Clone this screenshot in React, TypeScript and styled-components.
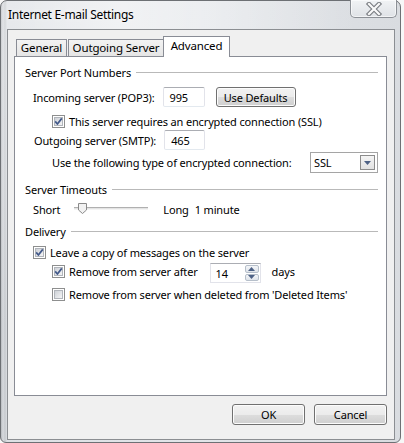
import React from "react";
import styled, { createGlobalStyle } from "styled-components";

const GlobalStyle = createGlobalStyle`
    html, body {
        margin: 0;
        padding: 0;
    }
    body {
        width: 404px;
        height: 443px;
        overflow: hidden;
        background: #f7f7f7;
        font-family: "Noto Sans", "DejaVu Sans", sans-serif;
        font-size: 11px;
        letter-spacing: -0.15px;
        color: #000;
    }
`;

const Window = styled.div`
    width: 401px;
    height: 443px;
    box-sizing: border-box;
    border: 1px solid #6d7074;
    border-radius: 7px 7px 6px 6px;
    background:
        radial-gradient(ellipse at 30% 10px, rgba(255, 255, 255, 0.55), rgba(255, 255, 255, 0) 60%),
        linear-gradient(90deg, #b7babe 0px, #d8dbdf 2px, #c6c9cd 4px, #dde0e4 6px, #e2e5e9 50%, #d9dce0 100%);
    display: flex;
    flex-direction: column;
`;

const TitleBar = styled.div`
    height: 28px;
    display: flex;
    align-items: flex-start;
    padding-left: 7px;
    padding-right: 3px;
`;

const Title = styled.span`
    margin-top: 5px;
    font-size: 12px;
    letter-spacing: -0.3px;
    text-shadow: 0 0 6px rgba(255, 255, 255, 0.9);
`;

const CloseButton = styled.div`
    margin-left: auto;
    width: 47px;
    height: 18px;
    margin-top: -1px;
    box-sizing: border-box;
    border: 1px solid #8c9096;
    border-top: none;
    border-radius: 0 0 5px 5px;
    background: linear-gradient(#f1f3f5, #dfe2e6);
    box-shadow: inset 0 0 0 1px rgba(255, 255, 255, 0.6);
    display: flex;
    align-items: center;
    justify-content: center;
`;

const Client = styled.div`
    margin: 0 5px 0 6px;
    height: 411px;
    box-sizing: border-box;
    border: 1px solid #8b8e92;
    background: #f0f0f0;
    padding: 6px 7px 0 6px;
    display: flex;
    flex-direction: column;
`;

const TabRow = styled.div`
    height: 21px;
    margin-bottom: -1px;
    padding-left: 2px;
    display: flex;
    align-items: flex-end;
    position: relative;
    z-index: 1;
`;

const Tab = styled.div<{ $w: number; $active?: boolean }>`
    width: ${(p) => p.$w}px;
    height: ${(p) => (p.$active ? 21 : 18)}px;
    box-sizing: border-box;
    margin-left: ${(p) => (p.$active ? -1 : 1)}px;
    border: 1px solid #898c95;
    border-bottom: ${(p) => (p.$active ? "none" : "1px solid #898c95")};
    background: ${(p) => (p.$active ? "#ffffff" : "linear-gradient(#f3f3f3, #e5e5e5)")};
    display: flex;
    justify-content: center;
    padding-top: ${(p) => (p.$active ? 1 : 0)}px;
    line-height: 16px;
    font-size: 11.5px;
    &:first-child {
        margin-left: 0;
    }
`;

const Panel = styled.div`
    height: 340px;
    box-sizing: border-box;
    border: 1px solid #898c95;
    background: #fff;
    padding: 7px 8px 0 10px;
    display: flex;
    flex-direction: column;
`;

const SectionHeader = styled.div<{ $mt?: number }>`
    height: 16px;
    margin-top: ${(p) => p.$mt ?? 0}px;
    display: flex;
    align-items: center;
    white-space: nowrap;
    &::after {
        content: "";
        flex: 1;
        height: 1px;
        margin-left: 5px;
        background: #b9b9b9;
    }
`;

const Row = styled.div<{ $mt?: number; $indent?: number; $h?: number }>`
    height: ${(p) => p.$h ?? 16}px;
    margin-top: ${(p) => p.$mt ?? 0}px;
    padding-left: ${(p) => p.$indent ?? 8}px;
    display: flex;
    align-items: center;
    white-space: nowrap;
`;

const TextBox = styled.div<{ $w: number; $ml?: number }>`
    width: ${(p) => p.$w}px;
    height: 20px;
    margin-left: ${(p) => p.$ml ?? 8}px;
    box-sizing: border-box;
    border: 1px solid #e2e3ea;
    border-top-color: #abadb3;
    border-bottom-color: #e3e9ef;
    border-radius: 2px;
    background: #fff;
    padding-left: 6px;
    display: flex;
    align-items: center;
`;

const PushButton = styled.div<{ $w: number; $h?: number; $ml?: number }>`
    width: ${(p) => p.$w}px;
    height: ${(p) => p.$h ?? 21}px;
    margin-left: ${(p) => p.$ml ?? 0}px;
    box-sizing: border-box;
    border: 1px solid #707070;
    border-radius: 3px;
    background: linear-gradient(#f2f2f2 0%, #ebebeb 50%, #dddddd 50%, #cfcfcf 100%);
    box-shadow: inset 0 0 0 1px #fcfcfc;
    display: flex;
    align-items: center;
    justify-content: center;
`;

const CheckLabel = styled.span`
    margin-left: 4px;
`;

const Select = styled.div`
    margin-left: auto;
    width: 68px;
    height: 21px;
    box-sizing: border-box;
    border: 1px solid #a5a5a5;
    background: #fff;
    display: flex;
    align-items: center;
    padding: 0 2px 0 3px;
`;

const SelectArrow = styled.div`
    margin-left: auto;
    width: 15px;
    height: 15px;
    box-sizing: border-box;
    border: 1px solid #8c8c8c;
    background: linear-gradient(#f4f4f4, #e2e2e2);
    display: flex;
    align-items: center;
    justify-content: center;
`;

const SpinBox = styled.div`
    width: 51px;
    height: 20px;
    margin-left: 12px;
    align-self: flex-start;
    box-sizing: border-box;
    border: 1px solid #e2e3ea;
    border-top-color: #abadb3;
    background: #fff;
    display: flex;
    align-items: center;
    padding: 1px 1px 1px 5px;
`;

const SpinButtons = styled.div`
    margin-left: auto;
    width: 14px;
    height: 100%;
    display: flex;
    flex-direction: column;
    gap: 1px;
`;

const SpinHalf = styled.div`
    flex: 1;
    box-sizing: border-box;
    border: 1px solid #b6bfca;
    border-radius: 2px;
    background: linear-gradient(#f3f5f8, #dfe4ea);
    display: flex;
    align-items: center;
    justify-content: center;
`;

const Slider = styled.div`
    position: relative;
    width: 74px;
    height: 16px;
    margin-left: 14px;
`;

const SliderTrack = styled.div`
    position: absolute;
    left: 0;
    right: 0;
    top: 6px;
    height: 3px;
    box-sizing: border-box;
    border-top: 1px solid #b0b0b0;
    border-bottom: 1px solid #f4f4f4;
    background: #e4e4e4;
`;

const SliderThumb = styled.svg`
    position: absolute;
    left: 4px;
    top: 2px;
`;

const Spacer = styled.span<{ $ml: number }>`
    margin-left: ${(p) => p.$ml}px;
`;

const Footer = styled.div`
    margin-top: 8px;
    display: flex;
    justify-content: flex-end;
    gap: 9px;
`;

const CheckBox = ({ checked }: { checked?: boolean }) => (
    <svg width="13" height="13" viewBox="0 0 13 13" style={{ flex: "none" }}>
        <defs>
            <linearGradient id="cbg" x1="0" y1="0" x2="1" y2="1">
                <stop offset="0" stopColor="#cbcfd5" />
                <stop offset="1" stopColor="#f7f7f8" />
            </linearGradient>
        </defs>
        <rect x="0.5" y="0.5" width="12" height="12" fill="#fff" stroke="#8e8f8f" />
        <rect x="2.5" y="2.5" width="8" height="8" fill="url(#cbg)" stroke="#b1b5bb" />
        {checked && (
            <path d="M3.2 6.4 L5.4 9 L9.8 3.4" fill="none" stroke="#42598a" strokeWidth="1.7" strokeLinejoin="round" />
        )}
    </svg>
);

const Triangle = ({ up }: { up?: boolean }) => (
    <svg width="7" height="4" viewBox="0 0 7 4">
        <path d={up ? "M0 4 L3.5 0 L7 4 Z" : "M0 0 L7 0 L3.5 4 Z"} fill="#4d6185" />
    </svg>
);

export default function App() {
    return (
        <>
            <GlobalStyle />
            <Window>
                <TitleBar>
                    <Title>Internet E-mail Settings</Title>
                    <CloseButton>
                        <svg width="18" height="14" viewBox="0 0 18 14">
                            <path d="M4 2 L14 12 M14 2 L4 12" stroke="#7a7d82" strokeWidth="4.4" strokeLinecap="square" />
                            <path d="M4 2 L14 12 M14 2 L4 12" stroke="#fafafa" strokeWidth="2.2" strokeLinecap="square" />
                        </svg>
                    </CloseButton>
                </TitleBar>
                <Client>
                    <TabRow>
                        <Tab $w={51}>General</Tab>
                        <Tab $w={96}>Outgoing Server</Tab>
                        <Tab $w={67} $active>
                            Advanced
                        </Tab>
                    </TabRow>
                    <Panel>
                        <SectionHeader>Server Port Numbers</SectionHeader>
                        <Row $h={20} $mt={7}>
                            Incoming server (POP3):
                            <TextBox $w={42}>995</TextBox>
                            <PushButton $w={80} $h={20} $ml={11}>
                                Use Defaults
                            </PushButton>
                        </Row>
                        <Row $mt={6} $indent={27}>
                            <CheckBox checked />
                            <CheckLabel>This server requires an encrypted connection (SSL)</CheckLabel>
                        </Row>
                        <Row $h={20} $mt={1} $indent={9}>
                            Outgoing server (SMTP):
                            <TextBox $w={41}>465</TextBox>
                        </Row>
                        <Row $h={21} $mt={2} $indent={27}>
                            Use the following type of encrypted connection:
                            <Select>
                                SSL
                                <SelectArrow>
                                    <Triangle />
                                </SelectArrow>
                            </Select>
                        </Row>
                        <SectionHeader $mt={8}>Server Timeouts</SectionHeader>
                        <Row $mt={4}>
                            Short
                            <Slider>
                                <SliderTrack />
                                <SliderThumb width="9" height="11" viewBox="0 0 9 11">
                                    <path d="M0.5 0.5 H8.5 V7 L4.5 10.5 L0.5 7 Z" fill="#f2f2f2" stroke="#8a8a8a" />
                                </SliderThumb>
                            </Slider>
                            <Spacer $ml={15}>Long</Spacer>
                            <Spacer $ml={6}>1 minute</Spacer>
                        </Row>
                        <SectionHeader $mt={6}>Delivery</SectionHeader>
                        <Row $mt={5}>
                            <CheckBox checked />
                            <CheckLabel>Leave a copy of messages on the server</CheckLabel>
                        </Row>
                        <Row $mt={3} $indent={27}>
                            <CheckBox checked />
                            <CheckLabel>Remove from server after</CheckLabel>
                            <SpinBox>
                                14
                                <SpinButtons>
                                    <SpinHalf>
                                        <Triangle up />
                                    </SpinHalf>
                                    <SpinHalf>
                                        <Triangle />
                                    </SpinHalf>
                                </SpinButtons>
                            </SpinBox>
                            <Spacer $ml={11}>days</Spacer>
                        </Row>
                        <Row $mt={7} $indent={27}>
                            <CheckBox />
                            <CheckLabel>Remove from server when deleted from 'Deleted Items'</CheckLabel>
                        </Row>
                    </Panel>
                    <Footer>
                        <PushButton $w={73}>OK</PushButton>
                        <PushButton $w={73}>Cancel</PushButton>
                    </Footer>
                </Client>
            </Window>
        </>
    );
}
